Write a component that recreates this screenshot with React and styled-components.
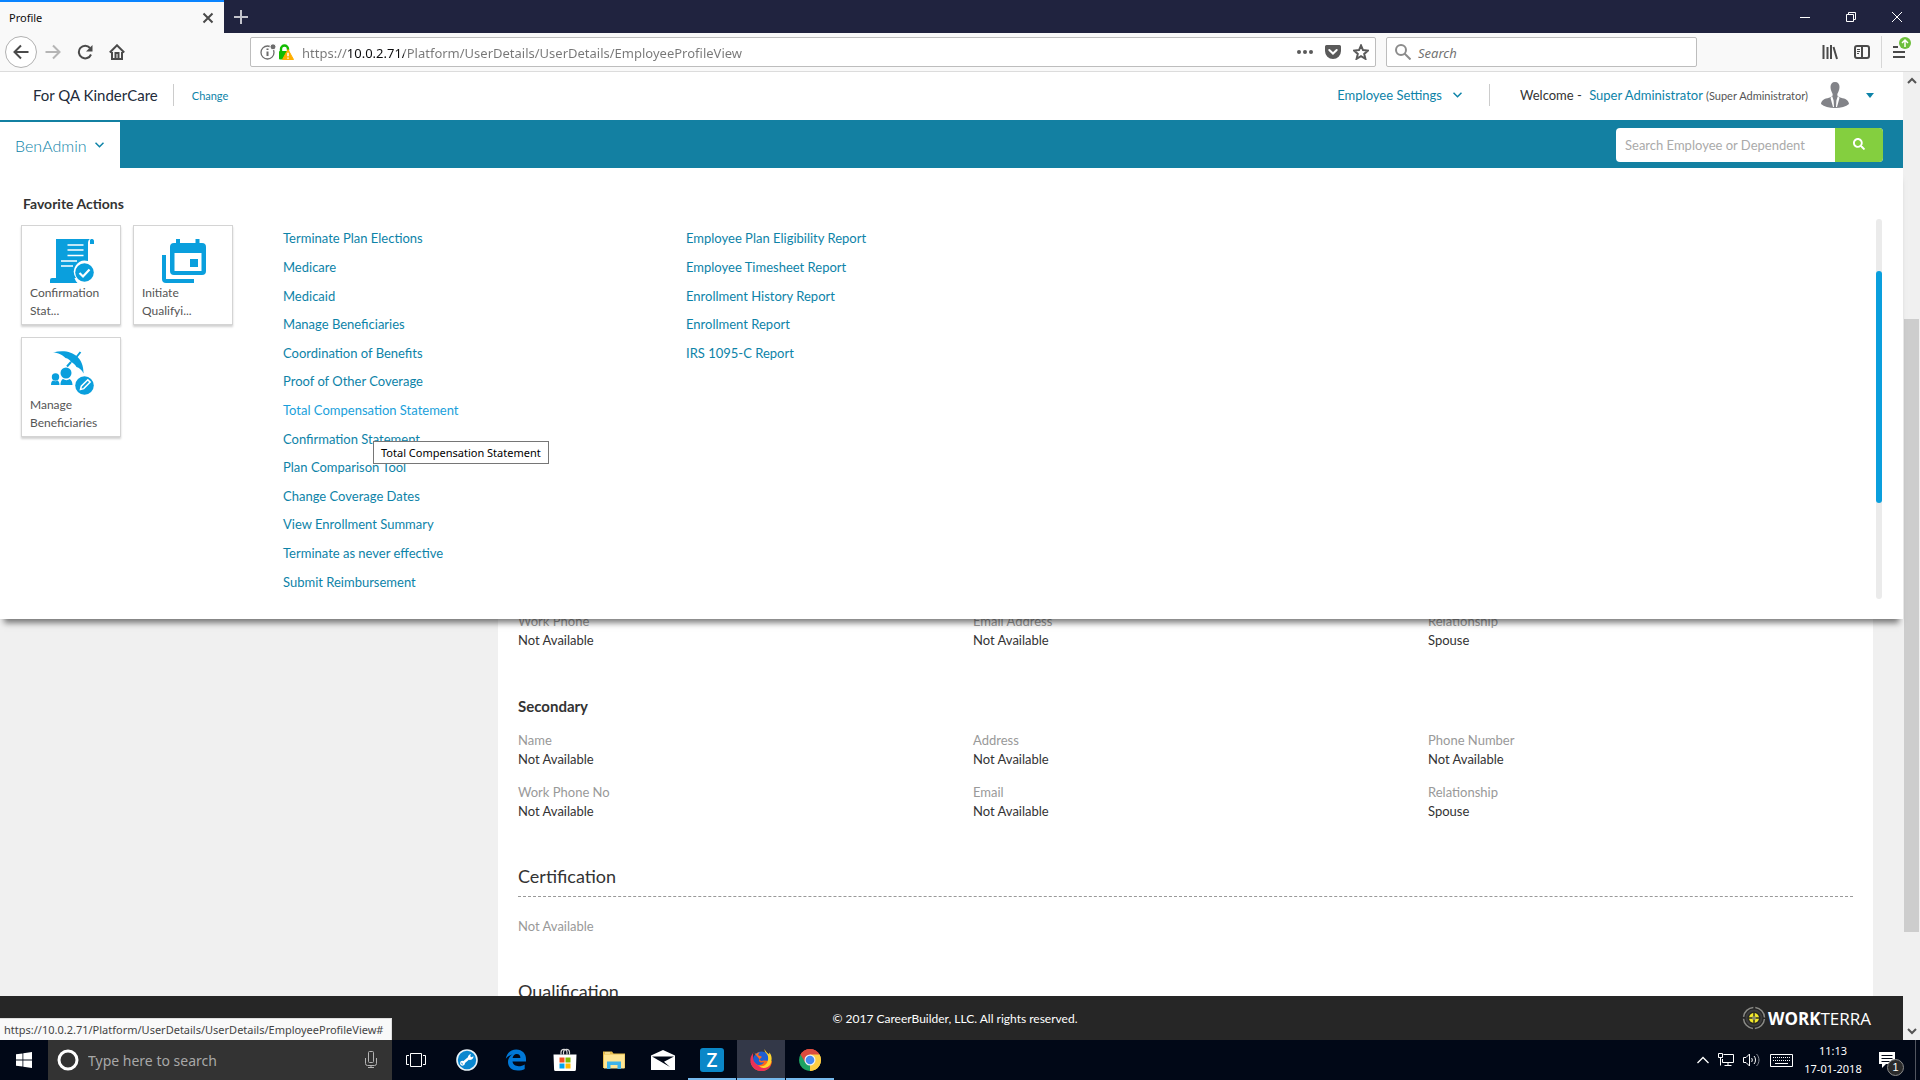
import React from "react";
import styled, { createGlobalStyle } from "styled-components";
import { FaSearch } from "react-icons/fa";

const favorites = [
  { title: "Confirmation Stat...", icon: <StatementIcon /> },
  { title: "Initiate Qualifyi...", icon: <EventIcon /> },
  { title: "Manage Beneficiaries", icon: <BeneficiaryIcon /> },
];

const actions = [
  "Terminate Plan Elections",
  "Medicare",
  "Medicaid",
  "Manage Beneficiaries",
  "Coordination of Benefits",
  "Proof of Other Coverage",
  "Total Compensation Statement",
  "Confirmation Statement",
  "Plan Comparison Tool",
  "Change Coverage Dates",
  "View Enrollment Summary",
  "Terminate as never effective",
  "Submit Reimbursement",
];

const reports = [
  "Employee Plan Eligibility Report",
  "Employee Timesheet Report",
  "Enrollment History Report",
  "Enrollment Report",
  "IRS 1095-C Report",
];

const primary = [
  ["Work Phone", "Not Available"],
  ["Email Address", "Not Available"],
  ["Relationship", "Spouse"],
];

const secondary = [
  ["Name", "Not Available"],
  ["Address", "Not Available"],
  ["Phone Number", "Not Available"],
  ["Work Phone No", "Not Available"],
  ["Email", "Not Available"],
  ["Relationship", "Spouse"],
];

export default function App() {
  return (
    <Screen>
      <GlobalStyle />
      <TitleBar />
      <Toolbar />
      <Viewport>
        <Page>
          <Header />
          <Nav />
          <Body>
            <MegaMenu />
            <Profile />
          </Body>
          <Footer />
        </Page>
        <PageScroll>
          <ScrollArrow viewBox="0 0 16 16"><path d="M4 10l4-4 4 4" /></ScrollArrow>
          <PageTrack><PageThumb /></PageTrack>
          <ScrollArrow viewBox="0 0 16 16"><path d="M4 6l4 4 4-4" /></ScrollArrow>
        </PageScroll>
        <StatusUrl>https://10.0.2.71/Platform/UserDetails/UserDetails/EmployeeProfileView#</StatusUrl>
      </Viewport>
      <Taskbar />
    </Screen>
  );
}

function TitleBar() {
  return (
    <TitleWrap>
      <Tab>
        <span>Profile</span>
        <IconButton aria-label="Close tab" $w={14}>
          <Line viewBox="0 0 14 14" $size={14} $color="#4a4a4a"><path d="M2.5 2.5l9 9M11.5 2.5l-9 9" /></Line>
        </IconButton>
      </Tab>
      <IconButton aria-label="New tab" $w={34}>
        <Line viewBox="0 0 16 16" $size={16} $color="#c3c4cc"><path d="M8 1v14M1 8h14" /></Line>
      </IconButton>
      <WindowButtons>
        <IconButton aria-label="Minimize" $w={46}>
          <Line viewBox="0 0 10 10" $size={10} $color="#fff" $stroke={1}><path d="M0 5.5h10" /></Line>
        </IconButton>
        <IconButton aria-label="Restore" $w={46}>
          <Line viewBox="0 0 10 10" $size={10} $color="#fff" $stroke={1}><path d="M.5 2.5h7v7h-7zM2.5 2.5v-2h7v7h-2" /></Line>
        </IconButton>
        <IconButton aria-label="Close" $w={46}>
          <Line viewBox="0 0 10 10" $size={10} $color="#fff" $stroke={1}><path d="M0 0l10 10M10 0L0 10" /></Line>
        </IconButton>
      </WindowButtons>
    </TitleWrap>
  );
}

function Toolbar() {
  return (
    <ToolWrap>
      <NavButtons>
        <BackButton aria-label="Back">
          <Line viewBox="0 0 16 16" $size={16} $color="#4a4a4a"><path d="M15.500 8H1.500M8 1.500L1.500 8 8 14.500" /></Line>
        </BackButton>
        <IconButton aria-label="Forward" $w={32}>
          <Line viewBox="0 0 16 16" $size={16} $color="#b5b5b5"><path d="M.5 8h14M8 1.500L14.500 8 8 14.500" /></Line>
        </IconButton>
        <IconButton aria-label="Reload" $w={32}>
          <Line viewBox="0 0 16 16" $size={16} $color="#4a4a4a">
            <path d="M14 10.500A6.300 6.300 0 1 1 13 4" />
            <path d="M15.500 1v6.500H9z" fill="#4a4a4a" strokeWidth="0" />
          </Line>
        </IconButton>
        <IconButton aria-label="Home" $w={32}>
          <Line viewBox="0 0 16 16" $size={16} $color="#4a4a4a">
            <path d="M.8 8.500L8 1.300l7.200 7.200M3 8v7h10V8" />
            <path d="M6.500 15V9h3v6" />
          </Line>
        </IconButton>
      </NavButtons>
      <UrlBox>
        <svg width="16" height="16" viewBox="0 0 16 16" fill="none" stroke="#6d6d6d">
          <circle cx="7.500" cy="8.500" r="6.500" strokeWidth="1.300" />
          <path d="M7.500 7.500v4.500M7.500 4.500v1.500" strokeWidth="2" />
          <circle cx="13" cy="2.800" r="3" fill="#6d6d6d" stroke="#fff" />
        </svg>
        <svg width="16" height="16" viewBox="0 0 16 16">
          <path d="M3 8V5a3.500 3.500 0 0 1 7 0v1.500" fill="none" stroke="#12bc00" strokeWidth="2.400" />
          <rect x="1" y="7" width="10" height="8.500" rx="1" fill="#12bc00" />
          <path d="M10 5.500l5.500 10h-11z" fill="#ffae00" stroke="#ffae00" strokeLinejoin="round" />
          <path d="M10 8.800v3.400M10 13.400v1.400" stroke="#fff" strokeWidth="1.500" />
        </svg>
        <UrlInput aria-label="Address" defaultValue="https://10.0.2.71/Platform/UserDetails/UserDetails/EmployeeProfileView" />
        <IconButton aria-label="Page actions" $w={28}>
          <svg width="16" height="16" fill="#5a5a5a"><circle cx="2" cy="8" r="2" /><circle cx="8" cy="8" r="2" /><circle cx="14" cy="8" r="2" /></svg>
        </IconButton>
        <IconButton aria-label="Save to Pocket" $w={28}>
          <svg width="16" height="16" viewBox="0 0 16 16">
            <path d="M1.500 1h13A1.500 1.500 0 0 1 16 2.500V7A8 8 0 0 1 0 7V2.500A1.500 1.500 0 0 1 1.500 1z" fill="#5a5a5a" />
            <path d="M4.300 6L8 9.500 11.700 6" fill="none" stroke="#fff" strokeWidth="2" strokeLinecap="round" />
          </svg>
        </IconButton>
        <IconButton aria-label="Bookmark" $w={28}>
          <Line viewBox="0 0 16 16" $size={16} $color="#5a5a5a"><path d="M8 1.500l2 4.600 5 .5-3.800 3.300 1.200 4.900L8 12.200l-4.400 2.600 1.200-4.900L1 6.600l5-.5z" /></Line>
        </IconButton>
      </UrlBox>
      <FindBox>
        <Line viewBox="0 0 16 16" $size={16} $color="#8c8c8c"><circle cx="6" cy="6" r="5" /><path d="M9.500 9.500l6 6" /></Line>
        <FindInput aria-label="Web search" placeholder="Search" />
      </FindBox>
      <ToolRight>
        <IconButton aria-label="Library" $w={32}>
          <Line viewBox="0 0 16 16" $size={16} $color="#4a4a4a"><path d="M1.500 1v14M5.500 3v12M9 1v14M11.500 3l3.500 12" /></Line>
        </IconButton>
        <IconButton aria-label="Sidebar" $w={32}>
          <svg width="16" height="16" viewBox="0 0 16 16" fill="none" stroke="#4a4a4a" strokeWidth="2">
            <rect x="1" y="2" width="14" height="12" rx="2" />
            <path d="M8 2v12" />
            <path d="M3 5.500h3M3 7.500h3M3 9.500h2" strokeWidth="1" />
          </svg>
        </IconButton>
        <MenuSlot>
          <IconButton aria-label="Open menu" $w={36}>
            <svg width="20" height="32" viewBox="0 0 20 32">
              <path d="M1 11h5M1 16h12M1 21h12" stroke="#4a4a4a" strokeWidth="2" />
              <circle cx="13" cy="7" r="6" fill="#6cbf3b" />
              <path d="M13 11V4M10 7l3-3 3 3" fill="none" stroke="#fff" strokeWidth="1.500" />
            </svg>
          </IconButton>
        </MenuSlot>
      </ToolRight>
    </ToolWrap>
  );
}

function Header() {
  return (
    <HeaderWrap>
      <Client>For QA KinderCare</Client>
      <ChangeLink href="#">Change</ChangeLink>
      <HeaderRight>
        <SettingsLink href="#">
          Employee Settings <Chevron />
        </SettingsLink>
        <Welcome>
          Welcome - <UserLink href="#">Super Administrator</UserLink> <small>(Super Administrator)</small>
        </Welcome>
        <svg width="28" height="26" viewBox="0 0 28 26" fill="#828388">
          <path d="M14 0c3 0 4.500 2 4.500 5 0 1.500-.3 3-1 4.500-.6 1.300-1.200 2-1.200 3.500 0 1.200 1.500 2.200 3.700 2.700 4.500 1 7.500 2 8 6.300C25 24.500 20 26 14 26S3 24.500 0 22c.5-4.300 3.500-5.300 8-6.300 2.200-.5 3.700-1.500 3.700-2.700 0-1.500-.6-2.200-1.200-3.500-.7-1.500-1-3-1-4.500 0-3 1.500-5 4.500-5z" />
          <path d="M11 14l-1.500 2L12 25h1l-.4-6.500L11.500 15zM17 14l1.500 2L16 25h-1l.4-6.500 1.100-3.500z" fill="#fff" />
        </svg>
        <AccountButton aria-label="Account menu" $w={24}>
          <svg width="8" height="5"><path d="M0 0h8L4 5z" fill="#0d83a8" /></svg>
        </AccountButton>
      </HeaderRight>
    </HeaderWrap>
  );
}

function Nav() {
  return (
    <NavWrap>
      <NavTab>BenAdmin <Chevron /></NavTab>
      <EmployeeSearch>
        <input aria-label="Search employees" placeholder="Search Employee or Dependent" />
        <button aria-label="Search"><FaSearch size={12} /></button>
      </EmployeeSearch>
    </NavWrap>
  );
}

function MegaMenu() {
  return (
    <MenuWrap>
      <Favorites>
        <MenuTitle>Favorite Actions</MenuTitle>
        <Cards>
          {favorites.map((f) => (
            <Card href="#" key={f.title}>
              {f.icon}
              <span>{f.title}</span>
            </Card>
          ))}
        </Cards>
      </Favorites>
      <MenuColumn>
        {actions.map((a) => (
          <li key={a}>
            <MenuLink href="#" $active={a === "Total Compensation Statement"}>{a}</MenuLink>
            {a === "Total Compensation Statement" && <Tooltip role="tooltip">{a}</Tooltip>}
          </li>
        ))}
      </MenuColumn>
      <MenuColumn>
        {reports.map((r) => (
          <li key={r}><MenuLink href="#">{r}</MenuLink></li>
        ))}
      </MenuColumn>
      <MenuTrack><MenuThumb /></MenuTrack>
    </MenuWrap>
  );
}

function Profile() {
  return (
    <ProfileCard>
      <Fields rows={primary} />
      <SubHeading>Secondary</SubHeading>
      <Fields rows={secondary} />
      <SectionHeading>Certification</SectionHeading>
      <Empty>Not Available</Empty>
      <SectionHeading>Qualification</SectionHeading>
    </ProfileCard>
  );
}

function Fields({ rows }) {
  return (
    <FieldGrid>
      {rows.map(([label, value]) => (
        <Field key={label}>
          <dt>{label}</dt>
          <dd>{value}</dd>
        </Field>
      ))}
    </FieldGrid>
  );
}

function Footer() {
  return (
    <FooterWrap>
      <Copyright>© 2017 CareerBuilder, LLC. All rights reserved.</Copyright>
      <Brand>
        <svg width="24" height="24" viewBox="0 0 24 24" fill="none">
          <circle cx="12" cy="12" r="10.500" stroke="#8a8a86" strokeWidth="1.500" strokeDasharray="14.500 2" strokeDashoffset="-1" />
          <circle cx="12" cy="12" r="7.500" stroke="#3c3c3c" strokeWidth="2" />
          <circle cx="12" cy="12" r="5" fill="#f3e92a" />
          <path d="M12 6v12M6 12h12" stroke="#33331c" strokeWidth="1.500" />
          <circle cx="12" cy="12" r="2" fill="#8b8b6a" />
        </svg>
        <span><b>WORK</b>TERRA</span>
      </Brand>
    </FooterWrap>
  );
}

function Taskbar() {
  return (
    <TaskWrap>
      <TaskButton aria-label="Start">
        <svg width="16" height="16" viewBox="0 0 16 16" fill="#fff"><path d="M0 2.300L6.500 1.400v6.200H0zM7.300 1.300L16 0v7.600H7.300zM0 8.400h6.500v6.200L0 13.700zM7.300 8.400H16V16l-8.700-1.200z" /></svg>
      </TaskButton>
      <TaskSearch>
        <svg width="22" height="22"><circle cx="11" cy="11" r="9" fill="none" stroke="#fff" strokeWidth="3" /></svg>
        <TaskInput aria-label="Taskbar search" placeholder="Type here to search" />
        <svg width="12" height="18" viewBox="0 0 12 18" fill="none" stroke="#b4b4b4">
          <path d="M3.500 1.500a1 1 0 0 1 1-1h3a1 1 0 0 1 1 1v9a1 1 0 0 1-1 1h-3a1 1 0 0 1-1-1zM.5 7v5.500a2 2 0 0 0 2 2h7a2 2 0 0 0 2-2V7M6 14.500v2M3 16.500h6" />
        </svg>
      </TaskSearch>
      <TaskButton aria-label="Task view">
        <svg width="20" height="16" viewBox="0 0 20 16" fill="none" stroke="#fff"><path d="M4.500 1.500h11v13h-11zM3 3.500H.5v9H3M17 3.500h2.500v9H17" /></svg>
      </TaskButton>
      <Apps>
        <TaskButton aria-label="Support tool">
          <svg width="22" height="22" viewBox="0 0 22 22">
            <circle cx="11" cy="11" r="10" fill="#0a87cf" stroke="#e9f3f8" strokeWidth="1.600" />
            <path d="M6.500 14.500l7-6" stroke="#fff" strokeWidth="2.400" />
            <circle cx="6.500" cy="14.300" r="1.800" fill="none" stroke="#fff" strokeWidth="1.300" />
            <path d="M12 9.500c-.5-2.500 1-4 3-4.500l-.8 2.300 1.300 1 2-1c0 2.300-1.500 3.700-4 3.700z" fill="#fff" />
          </svg>
        </TaskButton>
        <TaskButton aria-label="Edge">
          <svg width="22" height="22" viewBox="0 0 22 22" fill="#0078d7">
            <path d="M.8 9.800C1.800 4 6 .5 11.300.5c6 0 9.700 4.300 9.700 9.500v2.600H7.500c.3 3.200 3 4.600 6.200 4.600 2.300 0 4.300-.7 6-1.800v4.500c-1.800 1-4.300 1.600-7 1.600-5.800 0-9.700-3.300-9.700-8.500 0-3.400 1.800-6.200 4.800-7.700C5 6 2.500 7.500.8 9.800zm6.800-.7h7.800c0-2.500-1.300-4-3.700-4-2.300 0-3.700 1.700-4.100 4z" />
          </svg>
        </TaskButton>
        <TaskButton aria-label="Store">
          <svg width="24" height="24" viewBox="0 0 24 24">
            <path d="M8 6.500V4.300a3 3 0 0 1 6 0V6.500M10.500 6.500V4.300a3 3 0 0 1 6 0v2.200" fill="none" stroke="#d8d8d8" strokeWidth="1.200" />
            <path d="M.5 6.500h23l-.6 15.300a1.300 1.300 0 0 1-1.300 1.200H2.400a1.300 1.300 0 0 1-1.300-1.200z" fill="#fff" />
            <path d="M6.500 9.500h5v5h-5z" fill="#f25022" /><path d="M12.500 9.500h5v5h-5z" fill="#7fba00" />
            <path d="M6.500 15.500h5v5h-5z" fill="#00a4ef" /><path d="M12.500 15.500h5v5h-5z" fill="#ffb900" />
          </svg>
        </TaskButton>
        <TaskButton aria-label="File Explorer">
          <svg width="22" height="20" viewBox="0 0 22 20">
            <path d="M0 1.500h9l1.500 2H22V18H0z" fill="#e8bd4c" />
            <path d="M1 4.500h20.500V18.500H1z" fill="#ffe694" />
            <path d="M2 2.500h5v1H2z" fill="#fff6d2" />
            <path d="M4 11.500h14v7.500h-3.500v-4h-7v4H4z" fill="#3fb4ea" />
          </svg>
        </TaskButton>
        <TaskButton aria-label="Mail">
          <svg width="24" height="20" viewBox="0 0 24 20"><path d="M0 5.500L12 0l12 5.500V20H0z" fill="#fff" /><path d="M1 6.500l22 0-10 5.300 6 5.200z" fill="#010817" /></svg>
        </TaskButton>
        <TaskButton aria-label="Z app" $open><ZTile>Z</ZTile></TaskButton>
        <TaskButton aria-label="Firefox" $open $active>
          <svg width="22" height="22" viewBox="0 0 22 22">
            <circle cx="11.500" cy="11" r="8.500" fill="#1f5fd0" />
            <path d="M3 2.500c.8 1.500 1.700 2.200 3.500 2.200 1-.8 2-1.300 3.500-1.200-1.500.9-2 2-1.700 2.700 1 1 2.500.6 3.500 1.500-.3 1.500-2.600 1.700-2.800 3.500 0 2 2.500 3 5 1.800-1.500 4-7 4-9.500.5C2.500 10.500.5 12 .8 14 2 19 6.500 22 11.500 22 18 22 22 17 22 11.500 21.500 14 18 10 11 12z" fill="#ff6a1c" />
            <path d="M1 7.500C.2 10 0 13 1.500 16 4 20.500 8 22 11.500 22c4.500 0 8-2.500 9.500-6-3 2.500-8 3-12 1C5.500 15.500 3 12 3 8V4z" fill="#ec2f58" />
            <path d="M14.500 0c0 2 .5 3 2 4.500 1.700 2 2 4.500 1.200 7.500-1 4-4.700 6-8.700 5 3 3 9 2.500 11.500-2C22.500 10.500 21.800 5.500 19 3.500l.3 2C17.500 4.500 15.500 2.500 14.500 0z" fill="#ffd52e" />
          </svg>
        </TaskButton>
        <TaskButton aria-label="Chrome" $open>
          <svg width="22" height="22" viewBox="0 0 22 22">
            <path d="M11 11L1.500 5.500a11 11 0 0 1 19 0z" fill="#dd4b3e" />
            <path d="M11 11l9.500-5.500A11 11 0 0 1 11 22z" fill="#ffce43" />
            <path d="M11 11v11A11 11 0 0 1 1.500 5.500z" fill="#1da362" />
            <path d="M11 5.500h9.500A11 11 0 0 0 1.500 5.500l4.700 8z" fill="#dd4b3e" />
            <path d="M15.800 13.700L11 22a11 11 0 0 0 9.500-16.500H11z" fill="#ffce43" />
            <circle cx="11" cy="11" r="5.500" fill="#f1f1f1" /><circle cx="11" cy="11" r="4.300" fill="#4688f1" />
          </svg>
        </TaskButton>
      </Apps>
      <Tray>
        <svg width="12" height="8" viewBox="0 0 12 8" fill="none" stroke="#fff" strokeWidth="1.300"><path d="M.5 7L6 1.500 11.500 7" /></svg>
        <svg width="16" height="14" viewBox="0 0 16 14" fill="none" stroke="#fff"><path d="M5.500 1.500h10v8h-11V6M10 9.500v3M6.500 12.500h7M.5.500h4v4h-4zM2.500 4.500v8" /></svg>
        <svg width="18" height="14" viewBox="0 0 18 14" fill="none" stroke="#fff">
          <path d="M.5 4.500H3L6.500 1v12L3 9.500H.5zM8.500 5c1 1 1 3 0 4" /><path d="M11 3c2 2 2 6 0 8" /><path d="M13.500 1c3.300 3.300 3.300 8.700 0 12" stroke="#8a8e98" />
        </svg>
        <svg width="23" height="13" viewBox="0 0 23 13" fill="none" stroke="#fff"><path d="M.5.500h22v12H.5z" /><path d="M3 3.500h17M3 6.500h17" strokeDasharray="1 1" /><path d="M5 9.500h13" /></svg>
        <Clock><span>11:13</span><span>17-01-2018</span></Clock>
        <Notify aria-label="Notifications">
          <svg width="16" height="16" viewBox="0 0 16 16"><path d="M0 0h16v12H7l-4 4v-4H0z" fill="#fff" /><path d="M2.500 3.500h11M2.500 6.500h11M2.500 9.500h8" stroke="#010817" /></svg>
          <Badge>1</Badge>
        </Notify>
      </Tray>
    </TaskWrap>
  );
}

function Chevron() {
  return (
    <svg width="9" height="6" viewBox="0 0 9 6" fill="none" stroke="#0d83a8" strokeWidth="1.500"><path d="M.5.700l4 4 4-4" /></svg>
  );
}

function StatementIcon() {
  return (
    <svg width="44" height="44" viewBox="0 0 44 44" fill="#0a9fdd">
      <path d="M6 0h34c-1.500 1-2 2.500-2 4v18a11 11 0 0 0-12 17H6z" />
      <path d="M41 0h1.500A2 2 0 0 1 44 2v3h-4V1z" />
      <path d="M2 39h22.500a11 11 0 0 0 3 5H0v-3a2 2 0 0 1 2-2z" />
      <path d="M17.500 6h16M17.500 11h16M17.500 16.500h16M11 22h16M11 27h12" stroke="#fff" strokeWidth="1.500" />
      <circle cx="34.500" cy="33.500" r="9.300" />
      <path d="M29.500 34l3.500 3.500 6.500-7" fill="none" stroke="#fff" strokeWidth="2.200" />
    </svg>
  );
}

function EventIcon() {
  return (
    <svg width="44" height="44" viewBox="0 0 44 44" fill="#0a9fdd">
      <path fillRule="evenodd" d="M14 0h4v4h15.500V0h4v4H40a4 4 0 0 1 4 4v24a4 4 0 0 1-4 4H12a4 4 0 0 1-4-4V8a4 4 0 0 1 4-4h2zM12.500 14v18h27V14z" />
      <path d="M28 20h8v8h-8z" />
      <path d="M0 16h4v24h28v4H4a4 4 0 0 1-4-4z" />
    </svg>
  );
}

function BeneficiaryIcon() {
  return (
    <svg width="44" height="44" viewBox="0 0 44 44" fill="#0a9fdd">
      <path d="M3 1.500C20-3 34 5 33.500 22.500 32 19 29 16.500 26.500 16 25.500 14 23 11.500 21 11 20 9 18 7.500 15.500 7 13 4 8 1.500 3 1.500z" />
      <path d="M30.500 1l-4 5M21 11l-4 4.500" fill="none" stroke="#0a9fdd" strokeWidth="2" />
      <circle cx="16" cy="22" r="5.500" />
      <path d="M10.500 34c0-4 1.500-5.500 2.500-6 2 1.500 5 1.500 6.500 0 1.500.8 3 2.500 3 6z" />
      <circle cx="5.500" cy="26" r="3.700" />
      <path d="M1 34c0-3 1-4 2-4.500 1.500 1 3.500 1 4.500 0 1 .5 2 2 2 4.500z" />
      <circle cx="34.500" cy="34.500" r="9.300" />
      <path d="M30.500 38.500l.8-3.300 6.500-6.500 2.400 2.400-6.500 6.500z" fill="none" stroke="#fff" strokeWidth="1.500" />
    </svg>
  );
}

const GlobalStyle = createGlobalStyle`
  * {
    box-sizing: border-box;
  }
  body {
    margin: 0;
    font-family: Lato, "Liberation Sans", sans-serif;
    color: #333;
  }
  a {
    text-decoration: none;
  }
  ul, dl, dd, h1, h2, h3 {
    margin: 0;
    padding: 0;
  }
  button {
    border: 0;
    padding: 0;
    background: none;
  }
  input {
    border: 0;
    outline: 0;
    padding: 0;
    min-width: 0;
    background: none;
  }
  svg {
    flex: none;
  }
`;

const systemFont = `"Noto Sans", "Open Sans", sans-serif`;

const Screen = styled.div`
  height: 100vh;
  display: flex;
  flex-direction: column;
  overflow: hidden;
`;

const Line = styled.svg`
  width: ${(p) => p.$size}px;
  height: ${(p) => p.$size}px;
  fill: none;
  stroke: ${(p) => p.$color};
  stroke-width: ${(p) => p.$stroke || 2};
`;

const IconButton = styled.button`
  width: ${(p) => p.$w}px;
  display: flex;
  align-items: center;
  justify-content: center;
`;

const TitleWrap = styled.div`
  display: flex;
  height: 33px;
  background: #20233f;
  font-family: ${systemFont};
`;

const Tab = styled.div`
  width: 224px;
  display: flex;
  align-items: center;
  justify-content: space-between;
  padding: 0 9px;
  border-top: 2px solid #0a84ff;
  background: #f9f9f9;
  color: #0c0c0d;
  font-size: 11px;
`;

const WindowButtons = styled.div`
  display: flex;
  margin-left: auto;
`;

const ToolWrap = styled.div`
  display: flex;
  align-items: center;
  height: 39px;
  background: #f9f9f9;
  border-bottom: 1px solid #dcdcdc;
  font-family: ${systemFont};
`;

const NavButtons = styled.div`
  display: flex;
  width: 250px;
  padding-left: 5px;
`;

const BackButton = styled.button`
  width: 32px;
  height: 32px;
  display: flex;
  align-items: center;
  justify-content: center;
  border: 1px solid #b1b1b1;
  border-radius: 50%;
  background: #fff;
`;

const UrlBox = styled.div`
  flex: 1;
  display: flex;
  align-items: center;
  height: 30px;
  padding: 0 0 0 9px;
  border: 1px solid #bdbdbd;
  border-radius: 2px;
  background: #fff;
  svg + svg {
    margin-left: 2px;
  }
`;

/* scheme and path are grey, the host is near black */
const UrlInput = styled.input`
  flex: 1;
  height: 28px;
  padding: 1px 0 0 8px;
  font-family: ${systemFont};
  font-size: 13px;
  color: transparent;
  background: linear-gradient(90deg, #777 54px, #0c0c0d 54px, #0c0c0d 110px, #777 110px);
  background-clip: text;
`;

const FindBox = styled.div`
  width: 311px;
  height: 30px;
  margin-left: 10px;
  padding: 0 8px;
  display: flex;
  align-items: center;
  gap: 7px;
  border: 1px solid #bdbdbd;
  border-radius: 2px;
  background: #fff;
`;

const FindInput = styled.input`
  flex: 1;
  padding-top: 1px;
  font-family: ${systemFont};
  font-size: 13px;
  &::placeholder {
    color: #737373;
    font-style: italic;
  }
`;

const ToolRight = styled.div`
  width: 223px;
  display: flex;
  justify-content: flex-end;
`;

const MenuSlot = styled.div`
  height: 32px;
  display: flex;
  margin-left: 3px;
  padding-left: 2px;
  border-left: 1px solid #d7d7d7;
`;

const Viewport = styled.div`
  position: relative;
  flex: 1;
  min-height: 0;
  display: flex;
`;

const Page = styled.div`
  flex: 1;
  min-width: 0;
  display: flex;
  flex-direction: column;
  background: #fff;
`;

const HeaderWrap = styled.header`
  display: flex;
  align-items: center;
  height: 48px;
  padding: 0 21px 2px 33px;
  background: #fff;
`;

const Client = styled.div`
  padding-right: 15px;
  border-right: 1px solid #ccc;
  font-size: 15px;
  line-height: 22px;
  color: #222b3a;
`;

const ChangeLink = styled.a`
  margin-left: 18px;
  font-size: 11px;
  color: #0d83a8;
`;

const HeaderRight = styled.div`
  display: flex;
  align-items: center;
  margin-left: auto;
`;

const SettingsLink = styled.a`
  display: flex;
  align-items: center;
  gap: 11px;
  padding-right: 27px;
  border-right: 1px solid #ccc;
  font-size: 13px;
  line-height: 22px;
  color: #0d83a8;
`;

const Welcome = styled.div`
  margin: 0 13px 0 30px;
  font-size: 13px;
  color: #333;
  small {
    font-size: 11px;
    color: #555;
  }
`;

const UserLink = styled.a`
  margin-left: 4px;
  color: #0d83a8;
`;

const AccountButton = styled(IconButton)`
  margin-left: 9px;
`;

const NavWrap = styled.nav`
  display: flex;
  align-items: center;
  justify-content: space-between;
  height: 48px;
  padding-right: 20px;
  background: #1380a2;
`;

const NavTab = styled.button`
  display: flex;
  align-items: center;
  justify-content: space-between;
  width: 120px;
  height: 48px;
  padding: 0 16px 0 15px;
  border-top: 2px solid #1380a2;
  background: #fff;
  font-family: Lato, sans-serif;
  font-size: 16px;
  font-weight: 300;
  color: #0d83a8;
`;

const EmployeeSearch = styled.div`
  display: flex;
  width: 267px;
  height: 34px;
  margin-top: 2px;
  border-radius: 4px;
  overflow: hidden;
  background: #fff;
  input {
    flex: 1;
    padding-left: 9px;
    font-family: Lato, sans-serif;
    font-size: 13px;
  }
  input::placeholder {
    color: #aaa;
  }
  button {
    width: 48px;
    background: #84cf3f;
    color: #fff;
  }
`;

const Body = styled.main`
  position: relative;
  flex: 1;
  min-height: 0;
  display: flex;
  background: #f0f0f0;
`;

const MenuWrap = styled.section`
  position: absolute;
  z-index: 1;
  top: 0;
  left: 0;
  right: 0;
  display: flex;
  padding: 51px 21px 20px;
  background: #fff;
  box-shadow: 0 8px 6px -4px rgba(0, 0, 0, 0.5);
`;

const Favorites = styled.div`
  width: 262px;
  margin-top: -25px;
`;

const MenuTitle = styled.h2`
  padding-left: 2px;
  font-size: 14px;
  line-height: 20px;
  color: #333;
`;

const Cards = styled.div`
  display: grid;
  grid-template-columns: 100px 100px;
  gap: 12px;
  margin-top: 11px;
`;

const Card = styled.a`
  display: flex;
  flex-direction: column;
  height: 100px;
  padding: 13px 8px 0;
  border: 1px solid #d4d4d4;
  box-shadow: 0 2px 2px rgba(0, 0, 0, 0.18);
  font-size: 12px;
  line-height: 18px;
  color: #555;
  svg {
    margin: 0 auto 1px 20px;
  }
`;

const MenuColumn = styled.ul`
  width: 403px;
  height: 380px;
  padding: 5px 0 3px;
  display: grid;
  grid-template-rows: repeat(13, 1fr);
  align-items: center;
  list-style: none;
  font-size: 13px;
  li {
    position: relative;
  }
`;

const MenuLink = styled.a`
  color: ${(p) => (p.$active ? "#1a9fdb" : "#0d83a8")};
`;

const Tooltip = styled.div`
  position: absolute;
  z-index: 2;
  left: 90px;
  top: 39px;
  height: 23px;
  padding: 0 7px;
  border: 1px solid #767676;
  background: #fff;
  color: #000;
  font-family: ${systemFont};
  font-size: 11px;
  line-height: 21px;
  white-space: nowrap;
`;

const MenuTrack = styled.div`
  width: 6px;
  margin-left: auto;
  padding-top: 52px;
  border-radius: 3px;
  background: #ebebeb;
`;

const MenuThumb = styled.div`
  height: 232px;
  border-radius: 3px;
  background: #0a9fdd;
`;

const ProfileCard = styled.article`
  flex: 1;
  margin: 0 30px 0 498px;
  padding: 444px 20px 0;
  overflow: hidden;
  background: #fff;
`;

const FieldGrid = styled.dl`
  display: grid;
  grid-template-columns: repeat(3, 1fr);
  column-gap: 30px;
`;

const Field = styled.div`
  margin-bottom: 14px;
  font-size: 13px;
  line-height: 19px;
  dt {
    color: #999;
  }
`;

const SubHeading = styled.h3`
  margin: 32px 0 15px;
  font-size: 15px;
  line-height: 20px;
  color: #333;
`;

const SectionHeading = styled.h2`
  margin: 30px 0 20px;
  padding-bottom: 9px;
  border-bottom: 1px dashed #999;
  font-size: 18px;
  font-weight: 400;
  line-height: 22px;
`;

const Empty = styled.p`
  margin: 0 0 44px;
  font-size: 13px;
  line-height: 19px;
  color: #999;
`;

const FooterWrap = styled.footer`
  position: relative;
  z-index: 1;
  display: grid;
  grid-template-columns: 1fr auto 1fr;
  align-items: center;
  height: 44px;
  padding: 0 32px 0 39px;
  background: #262626;
  color: #fff;
`;

const Copyright = styled.div`
  grid-column: 2;
  font-size: 12px;
`;

const Brand = styled.div`
  justify-self: end;
  display: flex;
  align-items: center;
  gap: 2px;
  font-family: "Open Sans", sans-serif;
  font-size: 17px;
`;

const PageScroll = styled.div`
  width: 17px;
  display: flex;
  flex-direction: column;
  align-items: flex-end;
  background: #f0f0f0;
`;

const ScrollArrow = styled.svg`
  width: 16px;
  height: 18px;
  fill: none;
  stroke: #555;
  stroke-width: 2;
`;

const PageTrack = styled.div`
  flex: 1;
  width: 16px;
  padding: 229px 1px 0 0;
`;

const PageThumb = styled.div`
  height: 613px;
  background: #cdcdcd;
`;

const StatusUrl = styled.div`
  position: absolute;
  z-index: 2;
  left: 0;
  bottom: 0;
  height: 22px;
  padding: 0 8px 0 4px;
  border-top: 1px solid #ddd;
  border-right: 1px solid #ddd;
  background: #f9f9f9;
  color: #444;
  font-family: ${systemFont};
  font-size: 11px;
  line-height: 22px;
`;

const TaskWrap = styled.div`
  display: flex;
  height: 40px;
  background: #010817;
  color: #fff;
  font-family: ${systemFont};
`;

const TaskButton = styled.button`
  width: 48px;
  height: 40px;
  display: flex;
  align-items: center;
  justify-content: center;
  background: ${(p) => (p.$active ? "#333848" : "none")};
  box-shadow: ${(p) => (p.$open ? "inset 0 -2px #76b9ed" : "none")};
`;

const TaskSearch = styled.div`
  width: 344px;
  padding: 0 15px 0 9px;
  display: flex;
  align-items: center;
  gap: 9px;
  background: #333;
`;

const TaskInput = styled.input`
  flex: 1;
  font-family: ${systemFont};
  font-size: 14px;
  &::placeholder {
    color: #a8a8a8;
  }
`;

const Apps = styled.div`
  display: flex;
  gap: 1px;
  margin-left: 3px;
`;

const ZTile = styled.span`
  width: 24px;
  height: 24px;
  border-radius: 3px;
  background: #0a87c8;
  color: #fff;
  font-family: "Open Sans", sans-serif;
  font-size: 19px;
  font-weight: 600;
  line-height: 24px;
`;

const Tray = styled.div`
  display: flex;
  align-items: center;
  gap: 9px;
  margin-left: auto;
  margin-right: 4px;
  padding-right: 20px;
  border-right: 1px solid #51555f;
`;

const Clock = styled.div`
  width: 62px;
  margin: 0 6px 0 0;
  display: flex;
  flex-direction: column;
  align-items: center;
  font-size: 11px;
  line-height: 18px;
  white-space: nowrap;
`;

const Notify = styled.button`
  position: relative;
  display: flex;
`;

const Badge = styled.span`
  position: absolute;
  left: 8px;
  top: 7px;
  width: 17px;
  height: 17px;
  border: 1px solid #8b8b8b;
  border-radius: 50%;
  background: #2b2b2b;
  color: #fff;
  font-size: 11px;
  line-height: 15px;
  text-align: center;
`;
